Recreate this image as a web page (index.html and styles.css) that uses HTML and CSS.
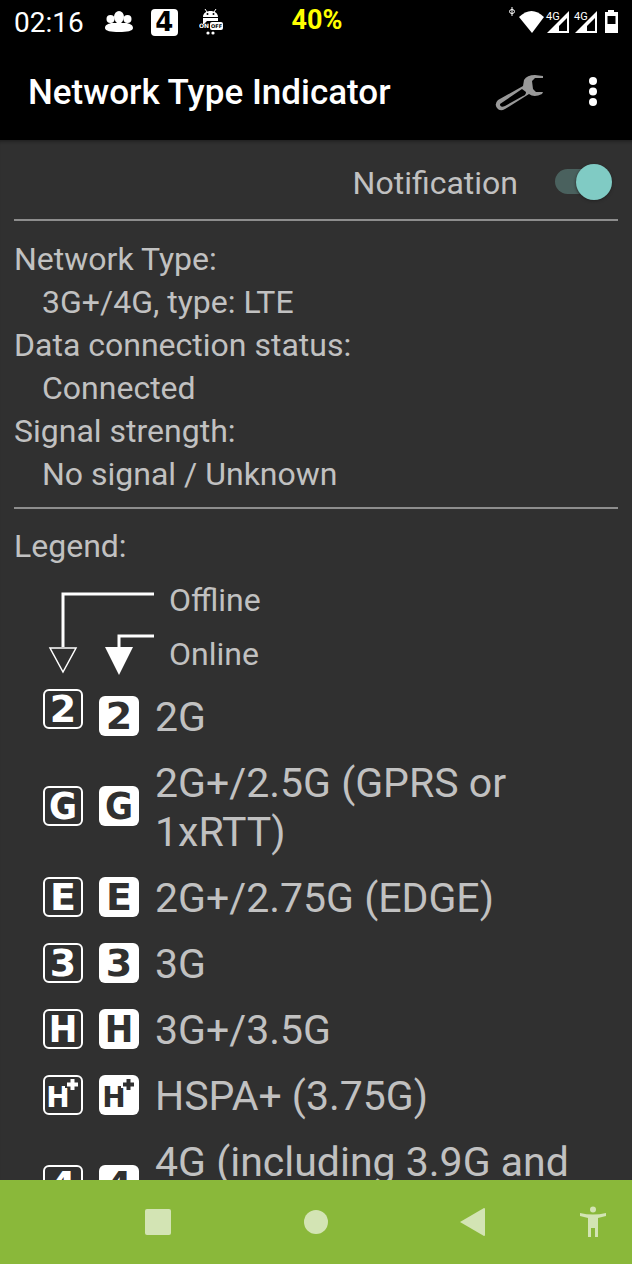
FILE: index.html
```html
<!DOCTYPE html>
<html lang="en">
<head>
<meta charset="utf-8">
<meta name="viewport" content="width=device-width, initial-scale=1">
<title>Network Type Indicator</title>
<link rel="stylesheet" href="styles.css">
</head>
<body>
<div class="status">
  <div class="status-left">
    <span class="clock">02:16</span>
    <svg class="people" width="30" height="24" viewBox="0 0 30 24" fill="#fff"><ellipse cx="15" cy="7" rx="5" ry="6"/><circle cx="6.500" cy="9" r="4"/><circle cx="23.500" cy="9" r="4"/><path d="M1 18c0-3 3-4 6-5h5l3-3 3 3h5c3 1 6 2 6 5 0 3-6 4-14 4S1 21 1 18z"/></svg>
    <span class="badge mini">4</span>
    <svg class="robot" width="24" height="28" viewBox="0 0 24 28"><path d="M6 1l2 3M17 1l-2 3" stroke="#fff" stroke-width="1"/><path d="M4 9c0-8 15-8 15 0zM4 10h15v3H8l-3 3H4z" fill="#fff"/><circle cx="8.500" cy="6" r="1"/><circle cx="14.500" cy="6" r="1"/><rect x="11" y="14" width="13" height="8" rx="2" fill="#fff"/><text x="0" y="20" class="robot-on">ON</text><text x="12" y="20" class="robot-off">OFF</text><circle cx="9" cy="25" r="1.600" fill="#fff"/><circle cx="14" cy="25" r="1.600" fill="#fff"/></svg>
  </div>
  <span class="percent">40%</span>
  <svg class="signals" width="112" height="32" viewBox="0 0 112 32" fill="#fff"><ellipse cx="4" cy="5.500" rx="2.500" ry="2" fill="none" stroke="#fff"/><path d="M4 1v9" stroke="#fff"/><path d="M11 11Q23.500-1 36 11L24 27z"/><path fill-rule="evenodd" d="M39 27L61 5v22zM51 25h8V12l-8 8zM67 27L89 5v22zM79 25h8V12l-8 8z"/><path fill="#000" d="M37 4h15v10H37zM65 4h15v10H65z"/><text x="38" y="14" class="net">4G</text><text x="66" y="14" class="net">4G</text><path fill-rule="evenodd" d="M97 6h3V4h6v2h4v21H97zM99.500 10v8h8v-8z"/></svg>
</div>
<header class="appbar">
  <h1>Network Type Indicator</h1>
  <button class="icon-button" aria-label="Settings"><svg width="50" height="40" viewBox="0 0 50 40"><path fill="#999" fill-rule="evenodd" d="M48 4L40 3Q32 3 29 8L28 14 3 28Q-1 32 2 36 5 40 10 37L34 22Q39 26 47 22L48 20H41L38 17 37 9 40 6H48zM27 17L31 20Q31 23 28 24L10 34Q5 36 5 32z"/></svg></button>
  <button class="icon-button more" aria-label="More options"><svg width="10" height="32" viewBox="0 0 10 32" fill="#fff"><circle cx="5" cy="5" r="4"/><circle cx="5" cy="15.500" r="4"/><circle cx="5" cy="26" r="4"/></svg></button>
</header>
<main>
  <label class="notification"><span>Notification</span><input type="checkbox" class="switch" role="switch" checked></label>
  <dl class="info">
    <dt>Network Type:</dt><dd>3G+/4G, type: LTE</dd>
    <dt>Data connection status:</dt><dd>Connected</dd>
    <dt>Signal strength:</dt><dd>No signal / Unknown</dd>
  </dl>
  <section class="legend">
    <h2>Legend:</h2>
    <div class="key">
      <svg width="108" height="84" viewBox="0 0 108 84" fill="none" stroke="#fff" stroke-width="3"><path d="M107 5H16v53M107 47H72v12"/><path stroke-width="1.500" d="M3 59h26L16 83z"/><path fill="#fff" stroke="none" d="M58 58h28L72 86z"/></svg>
      <div class="key-labels"><span>Offline</span><span>Online</span></div>
    </div>
    <ul>
      <li><span class="badge outline raised">2</span><span class="badge">2</span><span class="name">2G</span></li>
      <li><span class="badge outline narrow">G</span><span class="badge narrow">G</span><span class="name">2G+/2.5G (GPRS or 1xRTT)</span></li>
      <li><span class="badge outline">E</span><span class="badge">E</span><span class="name">2G+/2.75G (EDGE)</span></li>
      <li><span class="badge outline">3</span><span class="badge">3</span><span class="name">3G</span></li>
      <li><span class="badge outline narrow">H</span><span class="badge narrow">H</span><span class="name">3G+/3.5G</span></li>
      <li><span class="badge outline plus">H<svg width="15" height="15" viewBox="0 0 15 15"><path class="halo" d="M4 0h7v4h4v7h-4v4H4v-4H0V4h4z"/><path fill="#fff" d="M5.500 2h4v3.500H13v4H9.500V13h-4V9.500H2v-4h3.500z"/></svg></span><span class="badge plus">H<svg width="15" height="15" viewBox="0 0 15 15"><path fill="#fff" d="M4 0h7v4h4v7h-4v4H4v-4H0V4h4z"/><path fill="#303030" d="M5.500 2h4v3.500H13v4H9.500V13h-4V9.500H2v-4h3.500z"/></svg></span><span class="name">HSPA+ (3.75G)</span></li>
      <li><span class="badge outline">4</span><span class="badge">4</span><span class="name">4G (including 3.9G and LTE)</span></li>
    </ul>
  </section>
</main>
<nav>
  <span></span>
  <button aria-label="Recent apps"><svg width="32" height="32" viewBox="0 0 32 32"><rect x="3" y="3" width="26" height="26" rx="2"/></svg></button>
  <button aria-label="Home"><svg width="32" height="32" viewBox="0 0 32 32"><circle cx="16" cy="16" r="12"/></svg></button>
  <button aria-label="Back"><svg width="32" height="32" viewBox="0 0 32 32"><path d="M2 16L26 2q1 0 1 1v26q0 1-1 1z"/></svg></button>
  <button class="access" aria-label="Accessibility"><svg width="32" height="32" viewBox="0 0 32 32"><circle cx="16" cy="3.500" r="3"/><path d="M3 7Q16 10 29 7v3l-8 2v19h-3v-9h-4v9h-3V12L3 10z"/></svg></button>
</nav>
</body>
</html>
```
FILE: styles.css
```css
* { box-sizing: border-box; }
body {
  margin: 0;
  height: 100vh;
  display: flex;
  flex-direction: column;
  background: #303030;
  color: #c1c1c1;
  font-family: Roboto, "Liberation Sans", sans-serif;
  font-size: 32px;
  line-height: 43px;
}
button { border: 0; padding: 0; background: none; display: flex; align-items: center; justify-content: center; }
h1, h2, ul, dl, dd { margin: 0; padding: 0; }
svg { flex: none; display: block; }

.status {
  flex: none;
  height: 44px;
  padding: 0 12px 0 14px;
  display: grid;
  grid-template-columns: 1fr auto 1fr;
  align-items: center;
  background: #000;
  color: #fff;
}
.status-left { display: flex; align-items: center; }
.clock { font-size: 28px; margin-right: 20px; }
.people { margin-right: 17px; }
.robot { margin-left: 21px; }
.robot-on, .robot-off { font: bold 6px "DejaVu Sans", sans-serif; fill: #fff; }
.robot-off { font-size: 5px; fill: #000; }
.percent { color: #ff0; font-size: 27px; font-weight: bold; line-height: 40px; align-self: start; }
.signals { justify-self: end; }
.net { font: 11px Roboto, sans-serif; }

.appbar {
  flex: none;
  height: 96px;
  padding: 0 34px 0 28px;
  display: flex;
  align-items: center;
  background: #000;
  color: #fff;
}
.appbar h1 { flex: 1; font-size: 35px; font-weight: 500; }
.more { margin-left: 43px; }

main { flex: 1; min-height: 0; overflow: hidden; padding: 0 14px; box-shadow: inset 0 4px 3px -2px #222; }
.notification {
  height: 81px;
  padding: 4px 6px 0 0;
  display: flex;
  align-items: center;
  justify-content: flex-end;
  gap: 37px;
  border-bottom: 2px solid #8d8d8d;
}
.notification span { padding-top: 3px; }
.switch {
  appearance: none;
  flex: none;
  width: 57px;
  height: 36px;
  margin: 0;
  position: relative;
}
.switch::before {
  content: "";
  position: absolute;
  inset: 5px 6px 6px 0;
  border-radius: 13px;
  background: #4a615e;
}
.switch::after {
  content: "";
  position: absolute;
  right: 0;
  width: 36px;
  height: 36px;
  border-radius: 50%;
  background: #80cbc4;
  box-shadow: 0 1px 3px #222;
}
.info { padding: 17px 0 11px; border-bottom: 2px solid #8d8d8d; }
.info dd { padding-left: 28px; }

.legend { padding-top: 16px; }
.legend h2 { font-size: 32px; font-weight: normal; }
.key { display: flex; gap: 14px; margin: 21px 0 0 33px; }
.key svg { overflow: visible; }
.key-labels { display: grid; gap: 11px; margin-top: -10px; }
ul { list-style: none; }
.legend ul { padding: 9px 0 0 29px; }
.legend li { display: flex; align-items: center; padding: 8px 0 9px; }
.name { flex: 1; font-size: 41px; line-height: 49px; }
.badge {
  flex: none;
  width: 40px;
  height: 40px;
  margin: 0 16px 4px 0;
  border-radius: 6px;
  background: #fff;
  color: #303030;
  font: bold 38px/40px "DejaVu Sans", sans-serif;
  text-align: center;
}
.outline { background: none; border: 2px solid #fff; color: #fff; line-height: 36px; }
.raised { align-self: flex-start; margin-top: -4px; }
.narrow { font-family: "DejaVu Sans Condensed", "DejaVu Sans", sans-serif; }
.plus { position: relative; padding: 5px 10px 0 0; font-size: 28px; line-height: 35px; }
.plus.outline { padding: 3px 10px 0 0; }
.plus svg { position: absolute; top: 2px; right: 3px; }
.plus.outline svg { top: 0; right: 1px; }
.halo { fill: #303030; }
.badge.mini { width: 27px; height: 27px; margin: 0; border-radius: 4px; color: #000; font-size: 26px; line-height: 27px; }

nav {
  flex: none;
  height: 84px;
  display: grid;
  grid-template-columns: 1fr 2fr 2fr 2fr 1fr;
  align-items: center;
  background: #8ab83a;
  fill: #d3e4b4;
}
```
